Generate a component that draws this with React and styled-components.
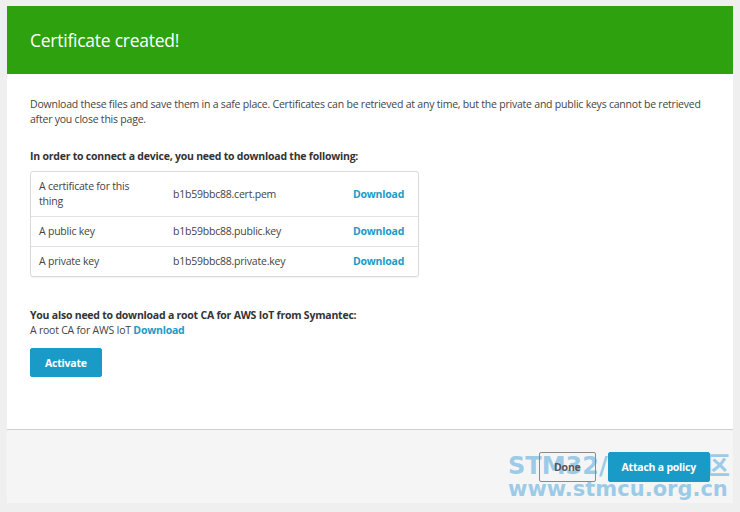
import React from "react";
import styled, { createGlobalStyle } from "styled-components";

const GlobalStyle = createGlobalStyle`
  html, body {
    margin: 0;
    background: #efefef;
    font-family: "Open Sans", "Noto Sans", sans-serif;
  }
`;

const files = [
  { label: "A certificate for this thing", name: "b1b59bbc88.cert.pem" },
  { label: "A public key", name: "b1b59bbc88.public.key" },
  { label: "A private key", name: "b1b59bbc88.private.key" },
];

export default function App() {
  return (
    <>
      <GlobalStyle />
      <Page>
        <Card>
          <Header>
            <Title>Certificate created!</Title>
          </Header>
          <Body>
            <Intro>
              Download these files and save them in a safe place. Certificates
              can be retrieved at any time, but the private and public keys
              cannot be retrieved after you close this page.
            </Intro>
            <Heading>
              In order to connect a device, you need to download the following:
            </Heading>
            <FileTable>
              {files.map((f) => (
                <FileRow key={f.name}>
                  <Label>{f.label}</Label>
                  <FileName>{f.name}</FileName>
                  <Link>Download</Link>
                </FileRow>
              ))}
            </FileTable>
            <Heading $spaced>
              You also need to download a root CA for AWS IoT from Symantec:
            </Heading>
            <Line>
              A root CA for AWS IoT <Link>Download</Link>
            </Line>
            <Button $primary $small>
              Activate
            </Button>
          </Body>
          <Footer>
            <Watermark>
              <span>STM32/STM8社区</span>
              <span>www.stmcu.org.cn</span>
            </Watermark>
            <Button>Done</Button>
            <Button $primary>Attach a policy</Button>
          </Footer>
        </Card>
      </Page>
    </>
  );
}

const Page = styled.div`
  padding: 6px 7px 9px 7px;
`;

const Card = styled.div`
  background: #fff;
  display: flex;
  flex-direction: column;
`;

const Header = styled.div`
  background: #2da10e;
  height: 68px;
  display: flex;
  align-items: center;
  padding: 0 23px;
`;

const Title = styled.h1`
  margin: 0;
  color: #fff;
  font-size: 17.5px;
  font-weight: 400;
  letter-spacing: -0.25px;
`;

const Body = styled.div`
  padding: 23px 23px 52px;
  color: #444;
  font-size: 10.5px;
  line-height: 15px;
  letter-spacing: -0.22px;
`;

const Intro = styled.p`
  margin: 0;
  max-width: 680px;
`;

const Heading = styled.p`
  margin: ${(p) => (p.$spaced ? "31px 0 0" : "22px 0 7px")};
  font-weight: 700;
  color: #333;
`;

const Line = styled.p`
  margin: 0 0 10px;
`;

const FileTable = styled.div`
  width: 387px;
  border: 1px solid #d9d9d9;
  border-radius: 3px;
  box-shadow: 0 1px 1px rgba(0, 0, 0, 0.05);
`;

const FileRow = styled.div`
  display: grid;
  grid-template-columns: 134px 180px 1fr;
  align-items: center;
  padding: 7px 8px;
  & + & {
    border-top: 1px solid #e1e1e1;
  }
`;

const Label = styled.span`
  max-width: 100px;
`;

const FileName = styled.span``;

const Link = styled.a`
  color: #1a9bc7;
  font-weight: 700;
  cursor: pointer;
`;

const Footer = styled.div`
  position: relative;
  background: #f5f5f5;
  border-top: 1px solid #cfcfcf;
  height: 73px;
  display: flex;
  align-items: center;
  justify-content: flex-end;
  gap: 12px;
  padding: 0 23px;
`;

const Button = styled.button`
  position: relative;
  font-family: inherit;
  font-size: 10.5px;
  font-weight: 700;
  letter-spacing: -0.22px;
  height: ${(p) => (p.$small ? "29px" : "30px")};
  padding: 0 ${(p) => (p.$small ? "14px" : p.$primary ? "13px" : "14px")};
  border-radius: 2px;
  border: 1px solid ${(p) => (p.$primary ? "#1a9bc7" : "#8a8a8a")};
  background: ${(p) => (p.$primary ? "#1a9bc7" : "transparent")};
  color: ${(p) => (p.$primary ? "#fff" : "#555")};
  cursor: pointer;
`;

const Watermark = styled.div`
  position: absolute;
  left: 501px;
  top: 25px;
  display: flex;
  flex-direction: column;
  color: rgba(140, 196, 230, 0.85);
  font-family: "DejaVu Sans", "Noto Sans CJK SC", sans-serif;
  font-weight: 700;
  line-height: 23px;
  font-size: 24px;
  white-space: nowrap;
  pointer-events: none;
  span + span {
    font-size: 21px;
  }
`;
